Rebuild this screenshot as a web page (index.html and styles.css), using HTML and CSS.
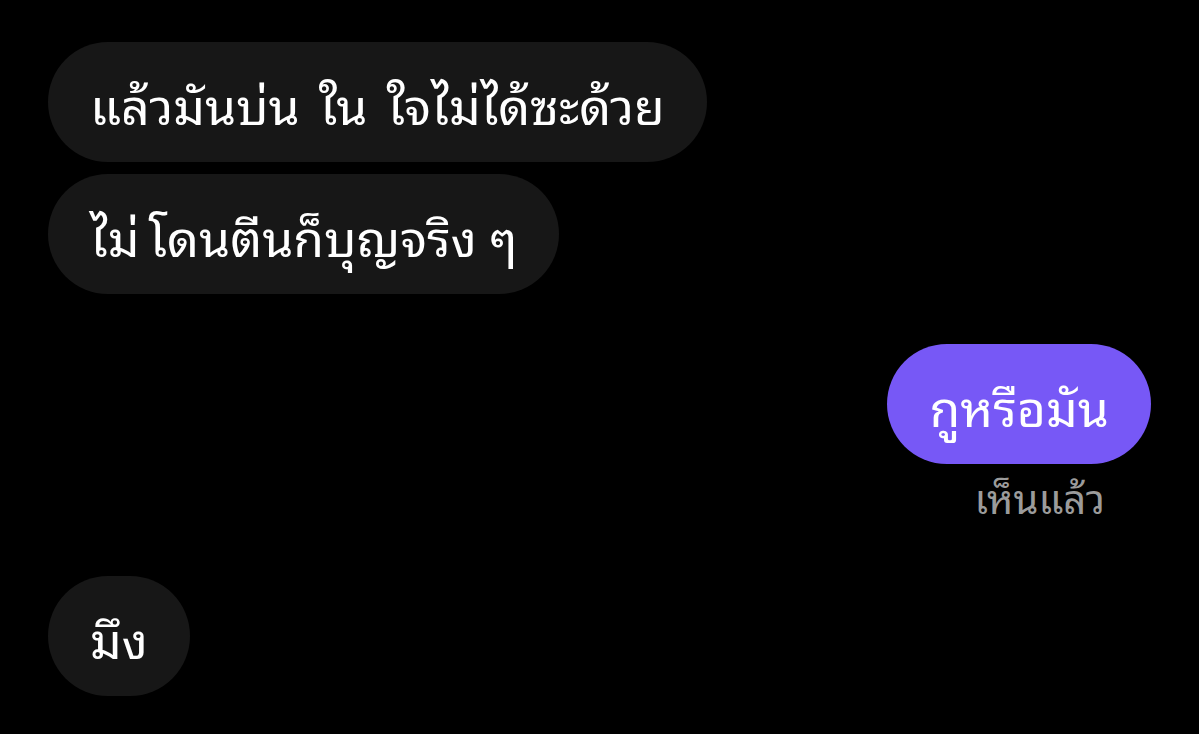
FILE: index.html
```html
<!DOCTYPE html>
<html lang="th">
<head>
<meta charset="utf-8">
<link rel="stylesheet" href="styles.css">
</head>
<body>
<div class="chat">
  <div class="group incoming">
    <div class="bubble gray">แล้วมันบ่น<span class="gap">ใน</span><span class="gap">ใจ</span>ไม่ได้ซะด้วย</div>
    <div class="bubble gray">ไม่<span class="gap-sm">โดน</span>ตีนก็บุญจริง ๆ</div>
  </div>
  <div class="group outgoing">
    <div class="bubble purple">กูหรือมัน</div>
    <div class="seen">เห็นแล้ว</div>
  </div>
  <div class="group incoming last">
    <div class="bubble gray">มึง</div>
  </div>
</div>
</body>
</html>
```
FILE: styles.css
```css
html, body {
  margin: 0;
  padding: 0;
  background: #000;
  width: 1199px;
  height: 734px;
  overflow: hidden;
}
.chat {
  display: flex;
  flex-direction: column;
  padding: 42px 48px 0 48px;
  font-family: "Noto Sans Thai Looped", "Noto Serif Thai", "Loma", "Garuda", "Noto Sans Thai", "Noto Sans", sans-serif;
}
.group {
  display: flex;
  flex-direction: column;
  gap: 12px;
}
.incoming { align-items: flex-start; }
.outgoing {
  align-items: flex-end;
  margin-top: 50px;
  gap: 10px;
}
.last { margin-top: 58px; }
.bubble {
  height: 120px;
  box-sizing: border-box;
  border-radius: 60px;
  display: flex;
  align-items: center;
  padding: 0 42px;
  font-size: 50px;
  color: #fff;
  white-space: nowrap;
}
.gap { margin-left: 19px; }
.gap-sm { margin-left: 9px; }
.gray { background: #171717; }
.purple { background: #7758f6; }
.seen {
  color: #9b9b9b;
  font-size: 40px;
  padding-right: 46px;
  line-height: 44px;
}
```
